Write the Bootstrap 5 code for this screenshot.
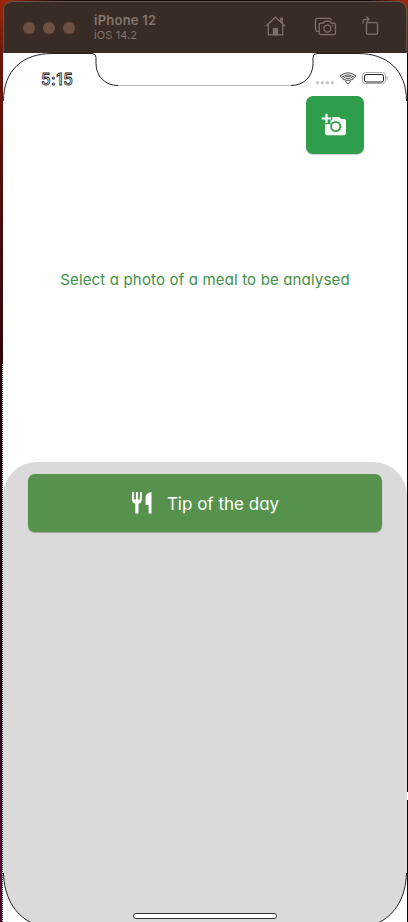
<!DOCTYPE html>
<html lang="en">
<head>
<meta charset="utf-8">
<meta name="viewport" content="width=device-width, initial-scale=1">
<title>Meal analyser</title>
<link href="https://cdn.jsdelivr.net/npm/bootstrap@5.3.0/dist/css/bootstrap.min.css" rel="stylesheet">
<style>
body{width:408px;height:922px;background:linear-gradient(90deg,#0000 8px,#14080a 60px,#14080a 370px,#0000 400px),linear-gradient(#9c260c 0,#6a1409 60px,#3a0c0c 300px,#1c0008 460px,#30061a 700px,#5a0a3c 860px,#4a0830 922px);font-family:Inter,"Noto Sans",sans-serif}
.simulator{width:404px;height:921px;margin:1px 1px 0 3px}
.titlebar{height:52px;background:#392b25;border:1px solid #625850;border-bottom:0;border-radius:9px 9px 0 0;padding-left:19px;color:#83766e}
.lamp{width:12px;height:12px;background:#6c5143}
.labels{margin-left:19px;width:171px}
.device{font-size:13px;line-height:15px;font-weight:600;letter-spacing:.25px}
.system{font-size:11px;line-height:14px;letter-spacing:.1px}
.titlebar svg{fill:none;stroke:#807269;stroke-width:1.25;margin-top:-3px}
.phone{height:869px;background:#fff}
.frame{left:0;top:0;pointer-events:none}
.statusbar{height:43px;padding:18px 19px 0 38px}
.clock{font-size:15.5px;line-height:16px;padding-top:1px;font-weight:500;letter-spacing:.5px;color:#fff;-webkit-text-stroke:.8px #222}
.photo-btn{width:58px;height:58px;background:#2f9e4b;border-radius:7px;margin-right:43px;box-shadow:0 1px 1px #0003}
.photo-btn svg{margin-right:3px}
.hint{height:308px;padding-top:114px;color:#419247;font-size:15px;line-height:24px}
.hint,.tip-btn{font-feature-settings:"cv11"}
.hint span{letter-spacing:.16px}
.sheet{height:460px;background:#dadada;border-radius:34px 34px 0 0;padding:12px 25px 3px 25px}
.tip-btn{height:58px;background:#56924c;border-radius:7px;color:#fff;font-size:17px;line-height:24px;box-shadow:0 1px 1px #0004}
.tip-btn:hover{background:#56924c;color:#fff}
.tip-btn svg{margin-right:14px}
.tip-btn span{padding-top:1px}
.homebar{width:144px;height:6px;background:#fff;border:1px solid #333}
.edge-dots{left:2px;top:364px;width:1px;height:558px;background:repeating-linear-gradient(#fff 0 1px,#000 1px 2px)}
.edge-right{right:0;top:53px;width:1px;height:869px;background:linear-gradient(#160305 0 739px,#fff 739px 747px,#160305 747px)}
</style>
<script src="https://cdn.jsdelivr.net/npm/bootstrap@5.3.0/dist/js/bootstrap.bundle.min.js"></script>
</head>
<body class="position-relative overflow-hidden">
<main class="simulator">
  <header class="titlebar d-flex align-items-center">
    <div class="d-flex gap-2"><span class="lamp rounded-circle"></span><span class="lamp rounded-circle"></span><span class="lamp rounded-circle"></span></div>
    <div class="labels"><div class="device">iPhone 12</div><div class="system">iOS 14.2</div></div>
    <svg width="118" height="24" viewBox="0 0 118 24" aria-hidden="true">
      <path d="M1 12 10.500 3.200 20 12M3.300 10.500v10.300h14.400V10.500M15.800 8V4.300h1.500v5"/>
      <path d="M8.500 20.500v-6h4v6z" fill="#807269"/>
      <path d="M54 17.300h-1.800q-1.700 0-1.700-1.700V6q0-1.700 1.700-1.700h12.600q1.500 0 1.500 2"/>
      <path d="M56.200 9.200h2.200l1.300-1.800h5.400l1.300 1.800h2.400q1.700 0 1.700 1.700v8q0 1.600-1.700 1.600H56q-1.800 0-1.800-1.600v-8q0-1.700 2-1.700z"/>
      <circle cx="62.400" cy="14.500" r="3.500"/><path d="M67.200 11.500h1"/>
      <rect x="101.500" y="8.500" width="11" height="11.500" rx="1"/>
      <path d="M98 9.500V8q0-2.800 3-2.800h2.500M101.500 2.500l2.600 2.700-2.600 2.600"/>
    </svg>
  </header>
  <section class="phone position-relative">
    <svg class="frame position-absolute" width="404" height="869" viewBox="0 0 404 869" fill="none" stroke="#222" aria-hidden="true">
      <path d="M.5 48C.5 17 20 .5 49 .5h40q4 0 4 4v6C93 23 102 32.500 115 32.500"/>
      <path d="M403.500 48C403.500 17 384 .5 355 .5h-41q-4 0-4 4v6C310 23 301 32.500 288 32.500"/>
      <path d="M115 32.500h173" stroke="#bbb"/>
      <path d="M0 815C0 842 11 861 28 869.500H0zM404 815C404 842 393 861 376 869.500h28z" fill="#fff" stroke="none"/>
      <path d="M.5 820C1 843 11 861 28 869.500M403.500 820C403 843 393 861 376 869.500"/>
    </svg>
    <div class="statusbar d-flex justify-content-between align-items-start">
      <span class="clock">5:15</span>
      <svg width="74" height="17" viewBox="0 0 74 17" fill="none" aria-hidden="true">
        <g fill="#c8c8cc"><circle cx="3.500" cy="11.800" r="1.800"/><circle cx="8.500" cy="11.800" r="1.800"/><circle cx="13.500" cy="11.800" r="1.800"/><circle cx="18.500" cy="11.800" r="1.800"/></g>
        <g stroke="#222" stroke-width=".8"><path d="M26 5q8-6.500 16 0l-1.400 1.500q-6.600-5.300-13.200 0zM28.500 7.700q5.500-4.500 11 0l-1.400 1.400q-4.100-3.300-8.200 0zM31.100 10.200q2.900-2.300 5.800 0l-2.900 2.800z"/></g>
        <rect x="48.500" y="1.500" width="23" height="11" rx="3.300" stroke="#aaa"/>
        <rect x="50.500" y="3.500" width="19" height="7.500" rx="1.800" stroke="#222"/>
        <path d="M73 5.500v3" stroke="#888"/>
      </svg>
    </div>
    <div class="d-flex justify-content-end">
      <button class="photo-btn btn border-0 p-0 d-flex align-items-center justify-content-center" aria-label="Add photo">
        <svg width="26" height="24" viewBox="0 0 26 24" aria-hidden="true">
          <path fill="#fff" d="M9.500 7h1.700V4h7l1.800 2h3q2 0 2 2v12.200q0 2-2 2H6q-2 0-2-2v-9h5.500z"/>
          <path fill="#fff" stroke="#2f9e4b" stroke-width=".8" d="M4 .5h3v3.600h3.600v2.800H7v3.600H4V6.900H.4V4.100H4z"/>
          <circle cx="14.700" cy="13.500" r="4.600" fill="none" stroke="#2f9e4b" stroke-width="1.900"/>
        </svg>
      </button>
    </div>
    <div class="hint text-center"><span>Select a photo of a meal to be analysed</span></div>
    <div class="sheet d-flex flex-column align-items-center justify-content-between">
      <button class="tip-btn btn border-0 w-100 p-0 d-flex align-items-center justify-content-center">
        <svg width="22" height="24" viewBox="0 0 22 24" fill="#fff" aria-hidden="true">
          <path d="M1 1h1.900v7.500h2V1h2v7.500h2V1h1.900v7.500q0 3.400-3.300 4.200V22.500H4.300v-9.800Q1 11.900 1 8.500zM20.500 1v21.500h-2.900V14h-3V6.500q0-4.500 5.900-5.500z"/>
        </svg>
        <span>Tip of the day</span>
      </button>
      <div class="homebar rounded-pill"></div>
    </div>
  </section>
</main>
<div class="edge-dots position-absolute"></div>
<div class="edge-right position-absolute"></div>
</body>
</html>
